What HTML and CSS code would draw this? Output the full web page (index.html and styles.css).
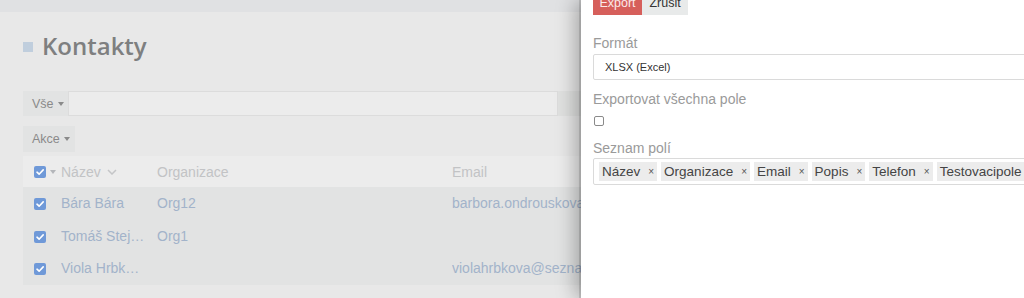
FILE: index.html
```html
<!DOCTYPE html>
<html lang="cs">
<head>
<meta charset="utf-8">
<title>Kontakty</title>
<link rel="stylesheet" href="styles.css">
</head>
<body>
<div class="page">
  <div class="topbar"></div>
  <div class="content">
    <h1 class="title"><span class="title-sq"></span>Kontakty</h1>
    <div class="search">
      <div class="btn btn-vse">Vše <span class="caret"></span></div>
      <div class="search-input"></div>
      <div class="search-btn"></div>
    </div>
    <div class="actions">
      <div class="btn btn-akce">Akce <span class="caret"></span></div>
    </div>
    <div class="table">
      <div class="row head">
        <div class="cell c-check">
          <svg class="cb" viewBox="0 0 12 12" width="12" height="12"><rect x="0" y="0" width="12" height="12" rx="2" fill="#6f99d8"/><path d="M3 6.2 L5.1 8.2 L9.2 3.9" fill="none" stroke="#fff" stroke-width="1.6" stroke-linecap="round" stroke-linejoin="round"/></svg>
          <span class="caret caret-sm"></span>
        </div>
        <div class="cell c-name">Název <svg class="chev" viewBox="0 0 10 6" width="10" height="6"><path d="M1 1 L5 5 L9 1" fill="none" stroke="#c4c5c7" stroke-width="1.5"/></svg></div>
        <div class="cell c-org">Organizace</div>
        <div class="cell c-mail">Email</div>
      </div>
      <div class="row">
        <div class="cell c-check"><svg class="cb" viewBox="0 0 12 12" width="12" height="12"><rect x="0" y="0" width="12" height="12" rx="2" fill="#6f99d8"/><path d="M3 6.2 L5.1 8.2 L9.2 3.9" fill="none" stroke="#fff" stroke-width="1.6" stroke-linecap="round" stroke-linejoin="round"/></svg></div>
        <div class="cell c-name">Bára Bára</div>
        <div class="cell c-org">Org12</div>
        <div class="cell c-mail">barbora.ondrouskova@seznam.cz</div>
      </div>
      <div class="row">
        <div class="cell c-check"><svg class="cb" viewBox="0 0 12 12" width="12" height="12"><rect x="0" y="0" width="12" height="12" rx="2" fill="#6f99d8"/><path d="M3 6.2 L5.1 8.2 L9.2 3.9" fill="none" stroke="#fff" stroke-width="1.6" stroke-linecap="round" stroke-linejoin="round"/></svg></div>
        <div class="cell c-name">Tomáš Stejskal</div>
        <div class="cell c-org">Org1</div>
        <div class="cell c-mail"></div>
      </div>
      <div class="row">
        <div class="cell c-check"><svg class="cb" viewBox="0 0 12 12" width="12" height="12"><rect x="0" y="0" width="12" height="12" rx="2" fill="#6f99d8"/><path d="M3 6.2 L5.1 8.2 L9.2 3.9" fill="none" stroke="#fff" stroke-width="1.6" stroke-linecap="round" stroke-linejoin="round"/></svg></div>
        <div class="cell c-name">Viola Hrbková</div>
        <div class="cell c-org"></div>
        <div class="cell c-mail">violahrbkova@seznam.cz</div>
      </div>
    </div>
  </div>
</div>

<aside class="panel">
  <div class="panel-btns">
    <div class="pbtn pbtn-export">Export</div>
    <div class="pbtn pbtn-cancel">Zrušit</div>
  </div>
  <div class="field f-format">
    <div class="label">Formát</div>
    <div class="select">XLSX (Excel)</div>
  </div>
  <div class="field f-all">
    <div class="label">Exportovat všechna pole</div>
    <div class="checkbox"></div>
  </div>
  <div class="field f-list">
    <div class="label">Seznam polí</div>
    <div class="tags">
      <span class="tag">Název<span class="x">×</span></span>
      <span class="tag">Organizace<span class="x">×</span></span>
      <span class="tag">Email<span class="x">×</span></span>
      <span class="tag">Popis<span class="x">×</span></span>
      <span class="tag">Telefon<span class="x">×</span></span>
      <span class="tag">Testovacipole<span class="x">×</span></span>
    </div>
  </div>
</aside>
</body>
</html>
```

FILE: styles.css
```css
* { box-sizing: border-box; }
html, body { margin: 0; padding: 0; }
body {
  width: 1024px;
  height: 298px;
  overflow: hidden;
  background: #e8e8e8;
  font-family: "Liberation Sans", Arial, sans-serif;
}

.page { width: 1024px; }
.topbar { height: 12px; background: #e0e1e3; }
.content { padding: 0 0 0 23px; }

.title {
  margin: 0;
  height: 57px;
  padding-top: 10px;
  display: flex;
  align-items: center;
  font-family: "Open Sans", sans-serif;
  font-weight: 600;
  font-size: 24px;
  color: #7e7f80;
  line-height: 36px;
}
.title-sq {
  width: 10px; height: 10px;
  background: #c0cedd;
  margin-right: 9px;
  margin-top: 3px;
}

.search {
  margin-top: 22px;
  display: flex;
  height: 25px;
}
.btn {
  display: flex;
  align-items: center;
  padding-left: 9px;
  background: #e2e3e3;
  color: #8a8a8a;
  font-size: 12.5px;
}
.btn-vse { width: 45px; }
.search-input {
  width: 490px;
  background: #ececec;
  border: 1px solid #dcdcdc;
}
.search-btn { flex: 1; background: #e0e1e0; }

.caret {
  display: inline-block;
  width: 0; height: 0;
  border-left: 3.5px solid transparent;
  border-right: 3.5px solid transparent;
  border-top: 4px solid #8a8a8a;
  margin-left: 4px;
}
.caret-sm { border-top-color: #b4b6ba; margin-left: 4px; }

.actions { margin-top: 10px; display: flex; height: 26px; }
.btn-akce { width: 52px; }

.table { margin-top: 4px; width: 1001px; }
.row {
  display: grid;
  grid-template-columns: 27px 96px 295px 1fr;
  padding-left: 11px;
  height: 32.5px;
  align-items: center;
  background: #e2e3e3;
  font-size: 14px;
  color: #a2b3ca;
}
.row.head {
  height: 31px;
  background: #ececec;
  color: #c2c3c5;
}
.cell { white-space: nowrap; overflow: hidden; text-overflow: ellipsis; }
.c-check { display: flex; align-items: center; }
.c-name { padding-right: 10px; }
.c-name .chev { margin-left: 2px; vertical-align: 2px; }
.row:not(.head) .cb { margin-top: 2px; }

/* side panel overlaying the page */
.panel {
  position: absolute;
  top: 0;
  left: 581px;
  width: 443px;
  height: 298px;
  background: #fff;
  padding: 0 0 0 12px;
  box-shadow: -2px 0 0 rgba(0,0,0,0.12), -6px 0 18px rgba(0,0,0,0.28);
  font-family: "Liberation Sans", Arial, sans-serif;
  overflow: hidden;
}
.panel-btns { display: flex; margin-top: -10px; height: 25px; }
.pbtn {
  display: flex;
  align-items: center;
  justify-content: center;
  font-size: 12.5px;
  height: 25px;
}
.pbtn-export { width: 49px; background: #d65f5b; color: #fbeaea; }
.pbtn-cancel { width: 46px; background: #e8eaea; color: #333; }

.field { display: flex; flex-direction: column; align-items: flex-start; }
.label {
  font-size: 14px;
  color: #9a9a9a;
  line-height: 20px;
}
.f-format .label { margin-top: 18px; }
.select {
  margin-top: 1px;
  width: 460px;
  height: 26px;
  border: 1px solid #dadada;
  border-radius: 2px;
  padding-left: 11px;
  display: flex;
  align-items: center;
  font-size: 11px;
  color: #333;
}
.f-all .label { margin-top: 9px; }
.checkbox {
  margin-top: 7px;
  margin-left: 1px;
  width: 10px; height: 10px;
  border: 1px solid #8a8a8a;
  border-radius: 2px;
}
.f-list .label { margin-top: 12px; }
.tags {
  width: 460px;
  height: 27px;
  border: 1px solid #dadada;
  border-radius: 2px;
  display: flex;
  align-items: center;
  padding-left: 5px;
  gap: 4px;
  white-space: nowrap;
}
.tag {
  display: inline-flex;
  align-items: center;
  background: #ececec;
  color: #444;
  font-size: 13.5px;
  height: 19px;
  padding: 0 3px 0 3px;
  flex-shrink: 0;
}
.tag .x { font-size: 10px; margin-left: 8px; color: #555; }
```
